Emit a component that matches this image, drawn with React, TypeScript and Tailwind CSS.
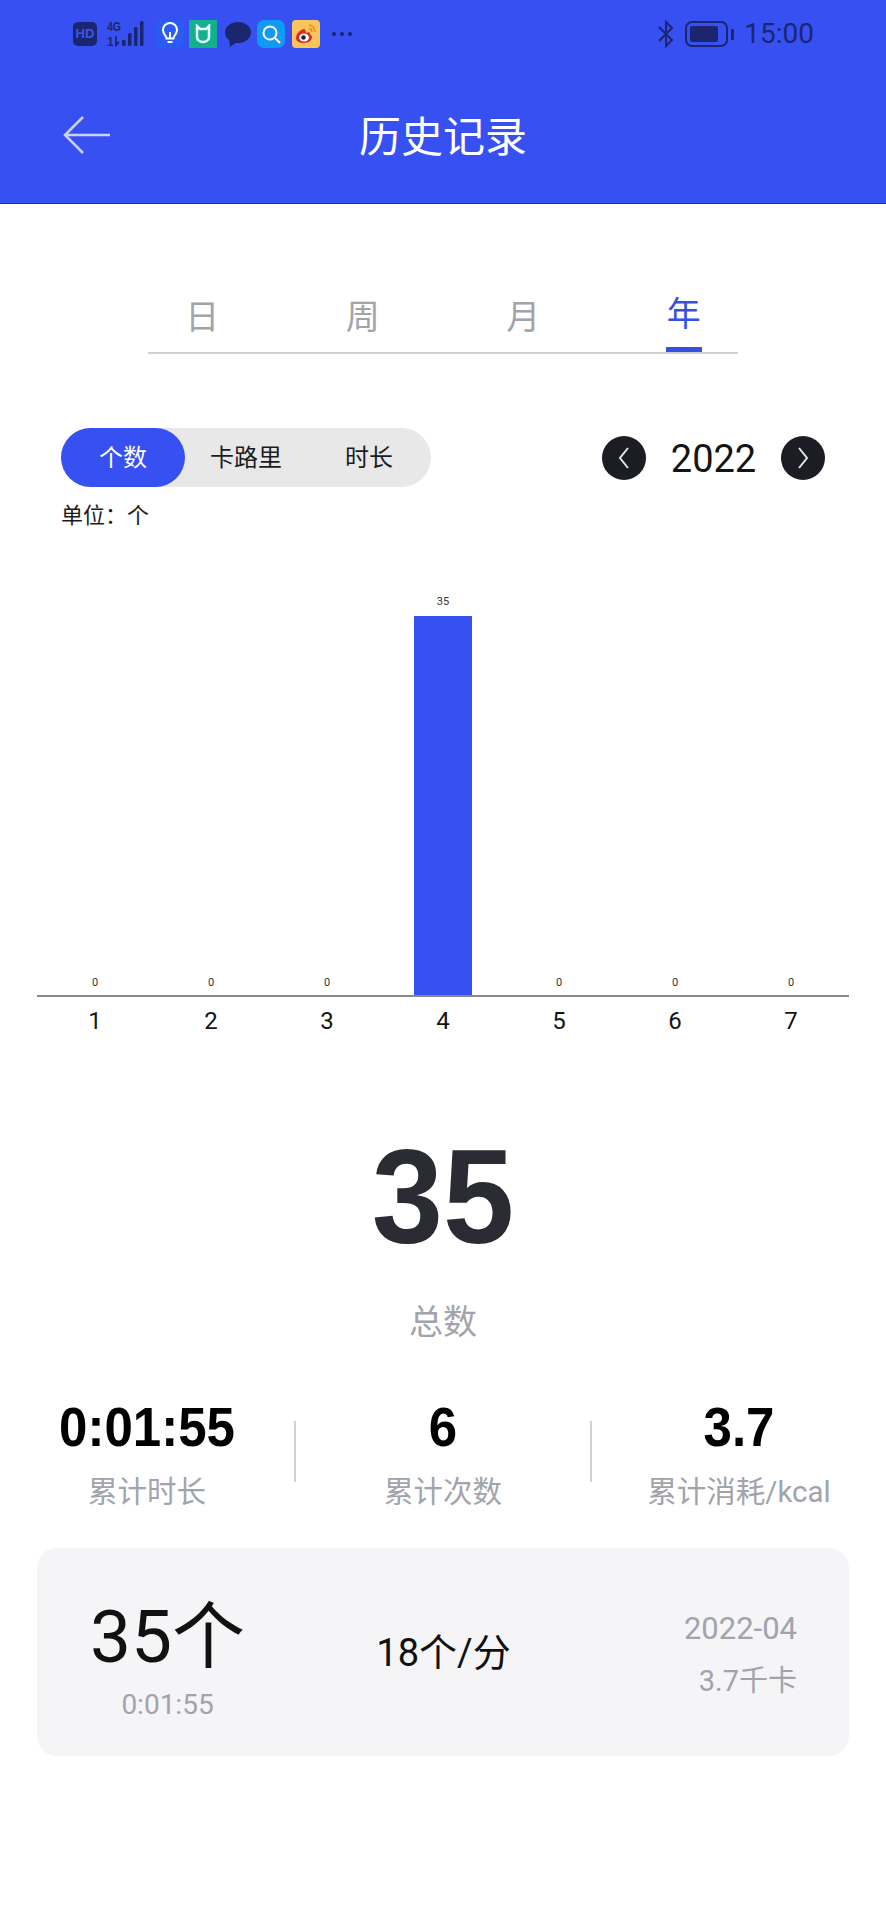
import React from "react";

const NAVY = "#1b2670";

function Signal() {
  return (
    <svg width="40" height="28" viewBox="0 0 40 28" className="ml-[10px]">
      <text x="0" y="11" fontSize="12" fontWeight="700" fill={NAVY} fontFamily="'Liberation Sans', sans-serif" textLength="14" lengthAdjust="spacingAndGlyphs">4G</text>
      <text x="0" y="26" fontSize="12" fontWeight="700" fill={NAVY} fontFamily="'Liberation Sans', sans-serif">1</text>
      <path d="M9 16v9l3-3" stroke={NAVY} strokeWidth="1.800" fill="none" />
      <rect x="15" y="20" width="3.500" height="6" rx="1.200" fill={NAVY} />
      <rect x="21" y="13" width="3.500" height="13" rx="1.200" fill={NAVY} />
      <rect x="27" y="7" width="3.500" height="19" rx="1.200" fill={NAVY} />
      <rect x="33" y="1" width="3.500" height="25" rx="1.200" fill={NAVY} />
    </svg>
  );
}

function StatusBar() {
  return (
    <div className="flex h-[68px] items-center justify-between pl-[73px] pr-[72px]">
      <div className="flex items-center">
        <div className="flex h-[24px] w-[24px] items-center justify-center rounded-[5px] bg-[#1b2670] font-['Liberation_Sans',sans-serif] text-[13px] font-bold text-[#3a57ee]">HD</div>
        <Signal />
        <div className="ml-[9px] flex h-[28px] w-[28px] items-center justify-center rounded-[7px] bg-[#2a5cf5]">
          <svg width="18" height="24" viewBox="0 0 18 24" fill="none" stroke="#fff" strokeWidth="2">
            <path d="M5.500 16.500c0-3-3.500-4-3.500-8.500a7 7 0 0 1 14 0c0 4.500-3.500 5.500-3.500 8.500z" />
            <path d="M6.500 20h5M9 16v-6" />
          </svg>
        </div>
        <div className="ml-[5px] flex h-[28px] w-[28px] items-center justify-center bg-[#12b08f]">
          <svg width="18" height="20" viewBox="0 0 18 20" fill="none" stroke="#e8fff8" strokeWidth="2.500">
            <path d="M3 2l3 3h6l3-3v11c0 3-3 5-6 5s-6-2-6-5z" />
          </svg>
        </div>
        <svg width="28" height="28" viewBox="0 0 28 28" className="ml-[7px]">
          <ellipse cx="14" cy="12.500" rx="13" ry="10.500" fill={NAVY} />
          <path d="M5 19l1 8 7-5z" fill={NAVY} />
        </svg>
        <div className="ml-[5px] flex h-[28px] w-[28px] items-center justify-center rounded-[7px] bg-[#0f9bf5]">
          <svg width="20" height="20" viewBox="0 0 20 20" fill="none" stroke="#fff" strokeWidth="2">
            <circle cx="9" cy="9" r="6.500" />
            <path d="M14 14l5 5" />
          </svg>
        </div>
        <div className="ml-[7px] flex h-[28px] w-[28px] items-center justify-center rounded-[4px] bg-[#f8c55a]">
          <svg width="24" height="24" viewBox="0 0 24 24" fill="none">
            <path d="M10 7c-5 1-8 6-8 9 0 3 3 5 8 5s8-3 8-6c0-2-2-2-2-3 0-2-2-2-4-1 0-2-1-4-2-4z" fill="#dd2a27" />
            <ellipse cx="10" cy="15.500" rx="5" ry="4" fill="#fff" />
            <circle cx="9.500" cy="15.500" r="2.200" fill="#222" />
            <path d="M15 3a7 7 0 0 1 6 7M15 6.500a3.500 3.500 0 0 1 3 3.500" stroke="#ee8a22" strokeWidth="1.500" />
          </svg>
        </div>
        <div className="ml-[12px] flex items-center gap-[4px]">
          <span className="h-[4px] w-[4px] rounded-full bg-[#1b2670]" />
          <span className="h-[4px] w-[4px] rounded-full bg-[#1b2670]" />
          <span className="h-[4px] w-[4px] rounded-full bg-[#1b2670]" />
        </div>
      </div>
      <div className="flex items-center">
        <svg width="18" height="28" viewBox="0 0 18 28" fill="none" stroke={NAVY} strokeWidth="2">
          <path d="M2 7l13 13-6 6V2l6 6L2 21" />
        </svg>
        <svg width="50" height="26" viewBox="0 0 50 26" className="ml-[10px]">
          <rect x="1" y="1" width="41" height="24" rx="6" fill="none" stroke={NAVY} strokeWidth="2" />
          <rect x="5" y="5" width="28" height="16" rx="2" fill={NAVY} />
          <rect x="46" y="8" width="3" height="11" rx="1" fill={NAVY} />
        </svg>
        <span className="ml-[9px] font-['Roboto',sans-serif] text-[28px] leading-none text-[#1b2670]">15:00</span>
      </div>
    </div>
  );
}

const tabs = ["日", "周", "月", "年"];
const values = [0, 0, 0, 35, 0, 0, 0];

function Tabs() {
  return (
    <div className="mx-[148px] mt-[81px] h-[69px] border-b-2 border-[#cfd0d4]">
      <div className="-mx-[26px] grid h-full grid-cols-4">
        {tabs.map((t, i) =>
          i === 3 ? (
            <div key={t} className="flex flex-col items-center pt-[5px]">
              <span className="text-[34px] leading-[49px] text-[#3650e0]">{t}</span>
              <span className="mt-auto h-[5px] w-[36px] bg-[#3650e0]" />
            </div>
          ) : (
            <div key={t} className="flex justify-center pt-[8px] text-[34px] leading-[49px] text-[#a2a3ab]">{t}</div>
          )
        )}
      </div>
    </div>
  );
}

function Controls() {
  return (
    <div className="mt-[74px] flex items-center justify-between pl-[61px] pr-[61px]">
      <div className="flex h-[59px] w-[370px] items-center rounded-full bg-[#e8e8e9] text-[24px] text-[#1c1c1c]">
        <div className="flex h-full w-[124px] items-center justify-center rounded-full bg-[#3650f2] text-white">个数</div>
        <div className="flex w-[122px] justify-center">卡路里</div>
        <div className="flex w-[124px] justify-center">时长</div>
      </div>
      <div className="flex items-center">
        <button className="flex h-[44px] w-[44px] items-center justify-center rounded-full bg-[#1c1c24]">
          <svg width="14" height="26" viewBox="0 0 14 26" fill="none" stroke="#e5e5e5" strokeWidth="2"><path d="M11 3L3 13l8 10" /></svg>
        </button>
        <span className="w-[135px] pt-[3px] text-center font-['Roboto',sans-serif] text-[38px] leading-none text-[#141414]">2022</span>
        <button className="flex h-[44px] w-[44px] items-center justify-center rounded-full bg-[#1c1c24]">
          <svg width="14" height="26" viewBox="0 0 14 26" fill="none" stroke="#e5e5e5" strokeWidth="2"><path d="M3 3l8 10-8 10" /></svg>
        </button>
      </div>
    </div>
  );
}

function Chart() {
  return (
    <div className="mx-[37px] mt-[62px]">
      <div className="grid h-[404px] grid-cols-7 items-end border-b-2 border-[#88898c]">
        {values.map((v, i) => (
          <div key={i} className="flex flex-col items-center justify-end">
            <span className={`font-['Roboto',sans-serif] text-[11px] leading-[13px] text-[#333] ${v > 0 ? "mb-[8px]" : "mb-[6px]"}`}>{v}</span>
            {v > 0 && <div className="h-[379px] w-[58px] bg-[#3650f2]" />}
          </div>
        ))}
      </div>
      <div className="grid grid-cols-7 pt-[10px]">
        {values.map((_, i) => (
          <div key={i} className="text-center font-['Roboto',sans-serif] text-[24px] leading-[28px] text-[#141414]">{i + 1}</div>
        ))}
      </div>
    </div>
  );
}

function Stat({ value, label }: { value: string; label: string }) {
  return (
    <div className="flex flex-1 flex-col items-center">
      <span className="scale-y-[1.1] font-['Liberation_Sans',sans-serif] text-[51px] font-bold leading-[60px] text-black">{value}</span>
      <span className="mt-[14px] whitespace-nowrap text-[29.5px] leading-[43px] text-[#a2a3ab]">{label}</span>
    </div>
  );
}

export default function App() {
  return (
    <div className="h-[1920px] w-[886px] overflow-hidden bg-white font-['Roboto','Noto_Sans_CJK_SC',sans-serif]">
      <header className="h-[204px] border-b border-[#1c2fa8] bg-[#3650f2]">
        <StatusBar />
        <div className="relative mt-[21px] flex h-[98px] items-center justify-center">
          <svg width="50" height="40" viewBox="0 0 50 40" fill="none" stroke="#c9d1fb" strokeWidth="2.500" className="absolute left-[62px] top-[26px]">
            <path d="M48 20H3M21 2L3 20l18 18" />
          </svg>
          <h1 className="text-[42px] leading-none text-white">历史记录</h1>
        </div>
      </header>
      <Tabs />
      <Controls />
      <div className="ml-[61px] mt-[14px] text-[22px] leading-[30px] text-[#1c1c1c]">单位：个</div>
      <Chart />
      <div className="mt-[96px] flex flex-col items-center">
        <span className="scale-y-[1.04] font-['Liberation_Sans',sans-serif] text-[128px] font-bold leading-[132px] text-[#2a2b33]">35</span>
        <span className="mt-[35px] text-[34px] leading-[48px] text-[#a2a3ab]">总数</span>
      </div>
      <div className="mt-[51px] flex">
        <Stat value="0:01:55" label="累计时长" />
        <div className="mt-[24px] h-[61px] w-[2px] bg-[#cfd0d4]" />
        <Stat value="6" label="累计次数" />
        <div className="mt-[24px] h-[61px] w-[2px] bg-[#cfd0d4]" />
        <Stat value="3.7" label="累计消耗/kcal" />
      </div>
      <div className="mx-[37px] mt-[34px] grid h-[208px] grid-cols-3 items-center rounded-[20px] bg-[#f5f5f7] pl-[53px] pr-[52px]">
        <div className="flex w-[155px] flex-col items-center pt-[12px]">
          <span className="whitespace-nowrap text-[73px] leading-[86px] text-[#111]">35个</span>
          <span className="mt-[8px] text-[28px] leading-[34px] text-[#a2a3ab]">0:01:55</span>
        </div>
        <div className="whitespace-nowrap pt-[2px] text-center text-[38px] leading-[50px] text-[#111]">18个/分</div>
        <div className="flex flex-col items-end pt-[5px] text-[#a2a3ab]">
          <span className="text-[31px] leading-[44px]">2022-04</span>
          <span className="mt-[8px] text-[29px] leading-[44px]">3.7千卡</span>
        </div>
      </div>
    </div>
  );
}
